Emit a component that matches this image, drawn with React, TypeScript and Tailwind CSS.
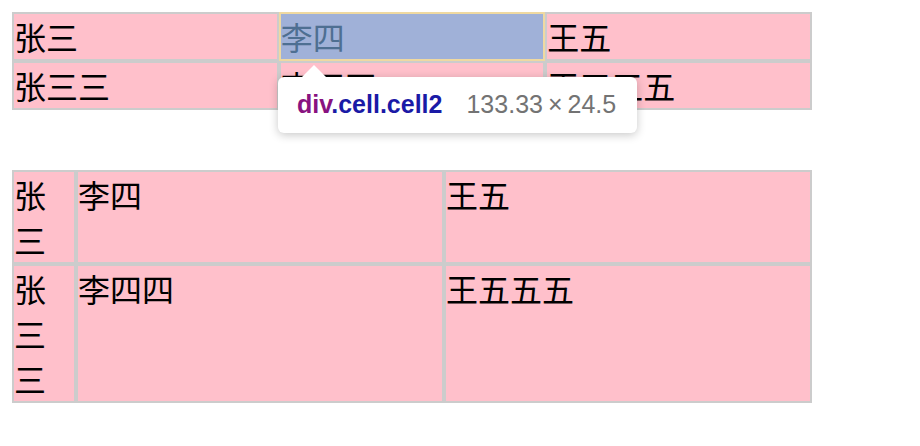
const cjk = "font-['Noto_Sans_CJK_SC','Noto_Sans',sans-serif]";

const cell = "border-2 border-[#ccc] bg-[#ffc0cb] text-[32px] leading-[45px] text-black overflow-hidden";

function Tooltip() {
  return (
    <div className="absolute left-[278px] top-[77px] z-10">
      <svg width="24" height="12" viewBox="0 0 24 12" className="absolute left-[24px] top-[-12px]">
        <path d="M0 12 L12 0 L24 12 Z" fill="#fff" />
      </svg>
      <div className="flex h-[56px] w-[359px] items-center gap-[24px] rounded-[6px] bg-white pl-[19px] font-['Liberation_Sans',Arial,sans-serif] text-[25px] shadow-[0_2px_10px_rgba(0,0,0,0.22)]">
        <span className="font-bold">
          <span className="text-[#881280]">div</span>
          <span className="text-[#1a1aa6]">.cell.cell2</span>
        </span>
        <span className="whitespace-nowrap text-[#737373]">
          133.33<span className="mx-[5px]">×</span>24.5
        </span>
      </div>
    </div>
  );
}

export default function App() {
  return (
    <div className={`relative min-h-[446px] w-[920px] bg-white px-[12px] pt-[12px] ${cjk}`}>
      {/* top grid: equal columns, devtools highlighting cell2 */}
      <div className="grid w-[800px] grid-cols-3">
        <div className={`${cell} h-[49px]`}>张三</div>
        <div className="h-[49px] border-2 border-[#efd9a1] bg-[#a0b1d8] text-[32px] leading-[45px] text-[#4e6f92]">李四</div>
        <div className={`${cell} h-[49px]`}>王五</div>
        <div className={`${cell} h-[49px]`}>张三三</div>
        <div className={`${cell} h-[49px]`}>李四四</div>
        <div className={`${cell} h-[49px]`}>王五五五</div>
      </div>

      <Tooltip />

      {/* bottom grid: narrow first column wraps */}
      <div className="mt-[60px] grid w-[800px] grid-cols-[64px_1fr_1fr]">
        <div className={cell}>张三</div>
        <div className={cell}>李四</div>
        <div className={cell}>王五</div>
        <div className={cell}>张三三</div>
        <div className={cell}>李四四</div>
        <div className={cell}>王五五五</div>
      </div>
    </div>
  );
}
